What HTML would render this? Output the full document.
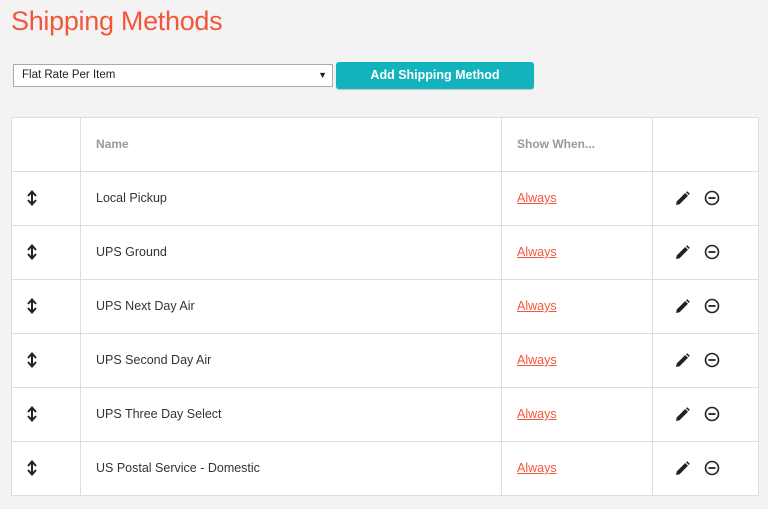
<!DOCTYPE html>
<html><head><style>
body{margin:0;background:#f3f3f3;font-family:"Liberation Sans",sans-serif;width:768px;height:509px;overflow:hidden;position:relative}
h1{position:absolute;left:11px;top:6px;margin:0;font-weight:normal;font-size:27px;color:#f4563b;letter-spacing:-0.3px}
.sel{position:absolute;left:13px;top:64px;width:318px;height:21px;background:#fff;border:1px solid #aaa;font-size:11.5px;line-height:21px;color:#222}
.sel span{position:absolute;left:8px}
.sel i{position:absolute;right:5px;top:0;font-style:normal;font-size:9px}
.btn{position:absolute;left:336px;top:62px;width:198px;height:27px;background:#12b3bc;border-radius:3px;color:#fff;font-weight:bold;font-size:12.5px;text-align:center;line-height:26px;box-shadow:0 1px 1px rgba(0,0,0,.2)}
table{position:absolute;left:11px;top:117px;border-collapse:collapse;background:#fff;width:747px;table-layout:fixed}
td,th{border:1px solid #ddd;height:52px;padding:0 0 1px 0;font-size:12.5px;color:#333;text-align:left;font-weight:normal}
th{color:#999;font-weight:bold;font-size:12px}
.n{padding-left:15px}
a{color:#f4563b;text-decoration:underline}
.ic{padding-left:22px}
</style></head><body>
<h1>Shipping Methods</h1>
<div class="sel"><span>Flat Rate Per Item</span><i>▼</i></div>
<div class="btn">Add Shipping Method</div>
<table>
<colgroup><col style="width:69px"><col style="width:421px"><col style="width:151px"><col style="width:106px"></colgroup>
<thead><tr><th></th><th class="n">Name</th><th class="n">Show When...</th><th></th></tr></thead>
<tbody id="tb"></tbody>
</table>
<script>
var names=["Local Pickup","UPS Ground","UPS Next Day Air","UPS Second Day Air","UPS Three Day Select","US Postal Service - Domestic"];
var arrow='<svg width="12" height="16" viewBox="0 0 12 16" style="margin-left:14px;vertical-align:middle"><path d="M6 2v12" stroke="#222" stroke-width="2"/><path d="M2 6L6 1.5 10 6M2 10l4 4.5L10 10" fill="none" stroke="#222" stroke-width="2"/></svg>';
var pen='<svg width="15" height="15" viewBox="0 0 15 15" style="vertical-align:middle"><path d="M1 14l0.8-3.6 8.4-8.4 2.8 2.8-8.4 8.4z" fill="#222"/><path d="M11 1.2l1.2-1 2.6 2.6-1 1.2z" fill="#222"/></svg>';
var minus='<svg width="16" height="16" viewBox="0 0 16 16" style="vertical-align:middle;margin-left:14px"><circle cx="8" cy="8" r="6.5" fill="none" stroke="#222" stroke-width="1.6"/><path d="M4.5 8h7" stroke="#222" stroke-width="1.8"/></svg>';
var h='';names.forEach(function(n){h+='<tr><td>'+arrow+'</td><td class="n">'+n+'</td><td class="n"><a>Always</a></td><td class="ic">'+pen+minus+'</td></tr>';});
document.getElementById('tb').innerHTML=h;
</script>
</body></html>
